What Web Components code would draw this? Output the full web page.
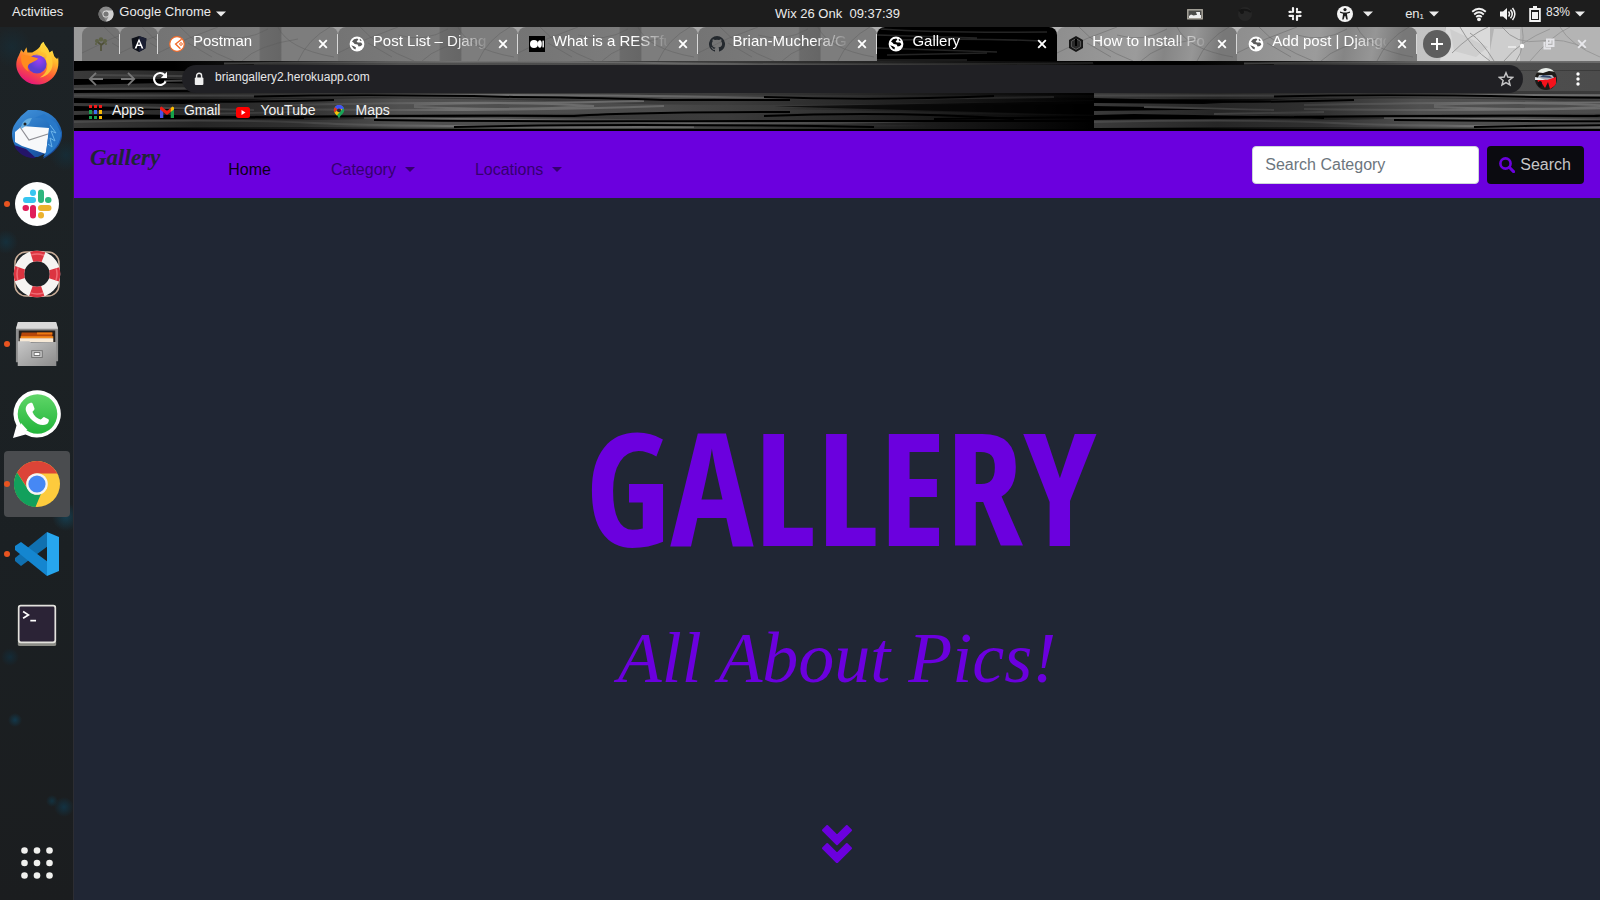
<!DOCTYPE html>
<html lang="en">
<head>
<meta charset="utf-8">
<title>Gallery</title>
<style>
html, body { height: 100%; margin: 0; }
body { background: #202634; font-family: "Liberation Sans", Arial, sans-serif; }
</style>
</head>
<body>
<desktop-shell></desktop-shell>

<script>
const ICONS = {
  globe: ['0 0 16 16', `<circle cx="8" cy="8" r="7.4" fill="#fff"/><path d="M3 5.5 5 3.2 8.2 2.4 9.4 3.6 7.6 5.6 8.8 6.6 12 6.4 13.4 8.2 12 10 9.6 10.4 8.6 8.6 5.6 8 4.6 6.8ZM2.2 9.2 5 10.2 7 11.4 6.4 13.4 4.6 12.6ZM11 2.8 12.8 4.4 11.6 5 10.6 4Z" fill="var(--land,#5c5c5c)"/>`],
  tree: ['0 0 16 16', `<path d="M8 15V8.500L4.500 6M8.200 9 12 6" stroke="#4f5038" stroke-width="1.600" fill="none"/><g fill="#5c6045"><circle cx="4" cy="5" r="2"/><circle cx="8" cy="3.400" r="2.200"/><circle cx="12" cy="5" r="2"/><circle cx="3" cy="8" r="1"/><circle cx="13" cy="8" r="1"/></g>`],
  angular: ['0 0 16 16', `<path d="M8 0 15.4 2.6 14.3 12.4 8 16 1.7 12.4.6 2.6Z" fill="#0d1018"/><path d="M8 0 15.4 2.6 14.3 12.4 8 16Z" fill="#1b1f33"/><path d="M8 2.4 3.6 12.4h1.9l.9-2.3h3.3l.9 2.3h1.8ZM8 5.8 9.1 8.5H6.9Z" fill="#fff"/>`],
  postman: ['0 0 16 16', `<circle cx="8" cy="8" r="7.300" fill="#fff" stroke="#f26b2a" stroke-width="1.200"/><path d="M12.600 3.200 6.600 8 11.400 12.800" fill="none" stroke="#f26b2a" stroke-width="1.400"/><circle cx="12" cy="8" r="1.300" fill="none" stroke="#f26b2a"/>`],
  medium: ['0 0 16 16', `<path d="M0 0h16v16H0Z"/><circle cx="5" cy="8" r="4" fill="#fff"/><ellipse cx="10.8" cy="8" rx="2" ry="3.7" fill="#fff"/><rect x="13.4" y="4.6" width="1.6" height="6.8" fill="#ddd"/>`],
  github: ['0 0 16 16', `<path fill="#24292e" d="M8 0a8 8 0 0 0-2.5 15.6c.4.1.5-.2.5-.4v-1.4c-2.2.5-2.7-1-2.7-1-.4-.9-.9-1.2-.9-1.2-.7-.5.1-.5.1-.5.8.1 1.2.8 1.2.8.7 1.2 1.9.9 2.3.7.1-.5.3-.9.5-1.1-1.8-.2-3.6-.9-3.6-4 0-.9.3-1.600.8-2.100-.1-.200-.4-1 .1-2.100 0 0 .7-.2 2.200.8a7.500 7.500 0 0 1 4 0c1.500-1 2.200-.8 2.200-.8.4 1.100.1 1.900.1 2.100.5.6.8 1.300.8 2.100 0 3.100-1.900 3.700-3.700 3.900.3.300.6.800.6 1.500v2.300c0 .2.1.5.5.4A8 8 0 0 0 8 0Z"/>`],
  hex: ['0 0 16 16', `<path d="M8 0 15 4V12L8 16 1 12V4Z" fill="#161616"/><path d="M8 2.600 12.600 5.300V10.700L8 13.400 3.400 10.700V5.300Z" fill="#2a2a2a" stroke="#6b6b6b" stroke-width=".8"/><path d="M8 2.600V10" stroke="#000" stroke-width="2" fill="none"/>`],
  close: ['0 0 16 16', `<path d="M4.200 4.200 11.800 11.800M11.800 4.200 4.200 11.800" stroke="currentColor" stroke-width="1.900"/>`],
  plus: ['0 0 28 28', `<circle cx="14" cy="14" r="14" fill="#5e5e5e"/><path d="M8 14H20M14 8V20" stroke="#fff" stroke-width="2"/>`],
  minimize: ['0 0 16 16', `<path d="M0 11h8" stroke="#e6e6e6" stroke-width="2"/><circle cx="14" cy="10" r="2.200" fill="#fff"/>`],
  restore: ['0 0 16 16', `<path d="M6 3.500h6.500V10H6ZM9.500 3.500V6.800H6M3.500 6V12.500H10" fill="none" stroke="#e4e4e8" stroke-width="2"/>`],
  back: ['0 0 16 16', `<path d="M15 8H2M8 1.800 1.800 8 8 14.200" fill="none" stroke="#787878" stroke-width="1.800"/>`],
  forward: ['0 0 16 16', `<path d="M1 8H14M8 1.800 14.200 8 8 14.200" fill="none" stroke="#787878" stroke-width="1.800"/>`],
  reload: ['0 0 16 16', `<path d="M13.600 10.300A6 6 0 1 1 12.600 4" fill="none" stroke="#fff" stroke-width="2.100"/><path d="M15 .8V7H8.800Z" fill="#fff"/>`],
  lock: ['0 0 16 16', `<rect x="3.800" y="6.500" width="8.600" height="7.500" rx="1" fill="#eee"/><path d="M5.600 7V4.800a2.500 2.500 0 0 1 5 0V7" fill="none" stroke="#eee" stroke-width="1.400"/>`],
  star: ['0 0 16 16', `<path d="M8 1.800 9.800 6.100 14.500 6.500 10.900 9.500 12 14 8 11.600 4 14 5.100 9.500 1.500 6.500 6.200 6.100Z" fill="none" stroke="#c4c4c6" stroke-width="1.500"/>`],
  avatar: ['0 0 22 22', `<clipPath id="c"><circle cx="11" cy="11" r="11"/></clipPath><g clip-path="url(#c)"><path d="M0 0h22v22H0Z" fill="#1d1b18"/><path d="M0 0H22V4L14 3 8 5 0 4Z" fill="#e8ece9"/><path d="M4 7 17 7 21 12H2Z" fill="#aab2bb"/><path d="M8 7 15 8 17 10 5 9Z" fill="#33476c"/><path d="M2 10 12 12 21 9V17L15 21 13 14 10 20 6 14 3 14Z" fill="#f5121c"/><path d="M0 9 5 10 11 12 5 12 0 12Z" fill="#e9eef2"/><ellipse cx="5" cy="16" rx="2" ry="3" fill="#111"/></g>`],
  dots: ['0 0 16 16', `<g fill="#fff"><circle cx="8" cy="3" r="1.700"/><circle cx="8" cy="8" r="1.700"/><circle cx="8" cy="13" r="1.700"/></g>`],
  apps: ['0 0 14 14', `<path d="M1 0h3v3H1ZM6 0h3v3H6ZM11 0h3v3h-3Z" fill="#f01818"/><path d="M1 5h3v4H1ZM1 11h3v3H1ZM6 11h3v3H6Z" fill="#18a050"/><path d="M6 5h3v4H6Z" fill="#3f70f0"/><path d="M11 5h3v4h-3ZM11 11h3v3h-3Z" fill="#f8ba08"/>`],
  gmail: ['0 0 14 14', `<path d="M0 3 3.300 5V13H0Z" fill="#4a50e8"/><path d="M10.700 5 14 3V13H10.700Z" fill="#16a34a"/><path d="M0 2.500 1.500 1.500 7 6 10.700 3V7L7 10 0 4.600Z" fill="#ee1c14"/><path d="M10.700 3 12.500 1.500 14 2.500V4.600L10.700 7Z" fill="#fbbc04"/>`],
  youtube: ['0 0 14 14', `<rect y="2" width="14" height="11" rx="2.500" fill="#f00"/><path d="M5.500 5 9.500 7.500 5.500 10Z" fill="#fff"/>`],
  maps: ['0 0 14 14', `<path d="M7 0a5.200 5.200 0 0 0-5.200 5.200C1.800 9 6 9.500 7 14 8 9.500 12.200 9 12.200 5.200A5.200 5.200 0 0 0 7 0Z" fill="#18a558"/><path d="M3 1.900A5.200 5.200 0 0 1 11.800 3.200L7 7Z" fill="#4468f0"/><path d="M3 1.900 5.600 4.200 2.500 7.800A5.200 5.200 0 0 1 3 1.900Z" fill="#e8301f"/><path d="M2.500 7.800 9.400 1.400 10 4.500 4.800 10.500Z" fill="#fbc108"/><circle cx="7" cy="5.200" r="2" fill="#2b2b2b"/><path d="M3 2A5.200 5.200 0 0 1 11.800 3.200L8.600 4A2 2 0 0 0 5.600 4.200Z" fill="#4450f4"/>`],
  chromegrey: ['0 0 16 16', `<circle cx="8" cy="8" r="7.500" fill="#8a8a8a"/><path d="M8 4.500h6.700A7.500 7.500 0 0 1 8 15.500L11 9.800Z" fill="#d0d0d0"/><path d="M1.500 4.200 5 9.700 8 15.500A7.500 7.500 0 0 1 1.500 4.200Z" fill="#6d6d6d"/><circle cx="8" cy="8" r="3.500" fill="#ddd"/><circle cx="8" cy="8" r="2.600" fill="#777"/>`],
  caret: ['0 0 10 10', `<path d="M0 2.500H10L5 7.500Z" fill="currentColor"/>`],
  picture: ['0 0 16 16', `<rect x=".8" y="3.800" width="14.400" height="9" fill="#4a4a48" stroke="#aeaaa0" stroke-width="1.400"/><path d="M2 10 4 8.500 6.500 9.500 9 9 14 9V12H2Z" fill="#eee"/><path d="M9 6H13V9H10Z" fill="#eee"/>`],
  orb: ['0 0 16 16', `<circle cx="8" cy="8" r="7" fill="#262626"/><path d="M2 5Q8 2 14 6" stroke="#161616" stroke-width="2" fill="none"/><circle cx="5" cy="6" r="2" fill="#151515"/>`],
  slackmono: ['0 0 16 16', `<g stroke="#f2f2f2" stroke-width="2.200" stroke-linecap="round"><path d="M6 2V5.500M2.500 5.800H3.500M10 3V3.500M10 6.200H13.500M2.500 9.800H6M6 12.500V13M10 10V14M12.500 9.800H13.500"/><path d="M10 2.500V6M2.500 6H6M6 10V13.500M10 10H13.500" stroke-width="1.600"/></g>`],
  access: ['0 0 16 16', `<circle cx="8" cy="8" r="8" fill="#f4f4f4"/><circle cx="8" cy="3.600" r="1.600" fill="#1d1d1d"/><path d="M3 5.500 6.400 6.400H9.600L13 5.500V6.800L9.900 7.800 10.800 13.500H9.400L8.300 10H7.700L6.600 13.500H5.200L6.100 7.800 3 6.800Z" fill="#1d1d1d"/>`],
  wifi: ['0 0 16 16', `<g fill="none" stroke="#f2f2f2" stroke-width="1.900"><path d="M1.200 5.800Q8 -.2 14.800 5.800"/><path d="M3.200 8.500Q8 4.200 12.800 8.500"/><path d="M5.200 11Q8 8.600 10.800 11"/></g><circle cx="8" cy="13.300" r="1.900" fill="#f2f2f2"/>`],
  volume: ['0 0 16 16', `<path d="M0 5.500H3L7 2V14L3 10.500H0Z" fill="#f2f2f2"/><g fill="none" stroke="#f2f2f2" stroke-width="1.500"><path d="M8.500 5.500Q10.500 8 8.500 10.500M10.500 3.700Q14 8 10.500 12.300M12.500 2Q17.200 8 12.500 14"/></g>`],
  battery: ['0 0 12 16', `<path d="M4 0H8V2H11.800V16H.2V2H4Z" fill="#f2f2f2"/><path d="M2 4H10V14H2Z" fill="#1d1d1d"/><path d="M3 6H9V13H3Z" fill="#f2f2f2"/>`],
  search: ['0 0 16 16', `<circle cx="6.500" cy="6.500" r="5.100" fill="none" stroke="#6b00de" stroke-width="2.600"/><path d="M10.300 10.300 14.600 14.600" stroke="#6b00de" stroke-width="3" stroke-linecap="round"/>`],
  chevrons: ['0 0 30 38', `<g fill="#6b00de" stroke="#6b00de" stroke-width="2" stroke-linejoin="round"><path d="M1 5.200 5.200 1 15 10.800 24.800 1 29 5.200 15 19.200ZM1 23.200 5.200 19 15 28.800 24.800 19 29 23.200 15 37.200Z"/></g>`],
  firefox: ['0 0 48 48', `<defs><linearGradient id="a" x1=".8" y1="0" x2=".3" y2="1"><stop offset="0" stop-color="#fff44f"/><stop offset=".35" stop-color="#ffb52a"/><stop offset=".65" stop-color="#ff5a36"/><stop offset="1" stop-color="#e3127f"/></linearGradient><radialGradient id="b" cx=".6" cy=".3"><stop offset="0" stop-color="#9a3ff5"/><stop offset="1" stop-color="#5b3fd0"/></radialGradient></defs><path d="M5 15 7.500 9 10 12 13 6.500 14 12 19 12C22 10 25 9 27 6 28 3 30 1 31 1 32 5 36 7 37 12L40 10 42 16C44 18 45 20 46 17 47 24 46 30 43 35A22 22 0 0 1 5 34C1 27 2 20 5 15Z" fill="url(#a)"/><circle cx="24" cy="24" r="10" fill="url(#b)"/><path d="M20 15C26 13 31 14 33 19 36 14 33 11 28 11L30 2C34 8 39 13 40 20 42 30 35 37 27 38 36 33 36 24 33 19 31 16 27 14 20 15Z" fill="#ffcf37" opacity=".85"/><path d="M8 14 17 16 25 18C24 21 20 21 18 23 14 24 13 29 16 32 9 29 6 21 8 14Z" fill="#ff8b1f"/>`],
  thunderbird: ['0 0 50 50', `<defs><linearGradient id="a" x1=".2" y1="0" x2=".8" y2="1"><stop offset="0" stop-color="#3f8fd8"/><stop offset=".6" stop-color="#1e68b8"/><stop offset="1" stop-color="#17408e"/></linearGradient></defs><path d="M9 7 16 1 22 1C34 0 47 8 50 23 51 34 44 43 31 50L34 44 26 48C13 49 0 40 0 25 0 17 5 12 9 7Z" fill="url(#a)"/><path d="M2 36C6 46 16 50 24 49L14 40Z" fill="#241468"/><path d="M3 23 10 17 37 19 34 45 10 37 3 33Z" fill="#f7f8fa"/><path d="M8 18 17 31 36 25" fill="none" stroke="#8e8e94" stroke-width="1.200"/><path d="M22 9C32 8 40 13 37 22L34 43 31 48C43 43 49 33 49 24L44 14 32 5Z" fill="#2878c8"/><path d="M38 16 44 24 39 22 43 32 38 29 40 38 36 35" fill="none" stroke="#6cb4ea" stroke-width="1"/><path d="M9 20C9 13 14 9 20 9L17 15Z" fill="#64acdf"/><circle cx="13" cy="15" r="1.500" fill="#222"/>`],
  slack: ['0 0 44 44', `<circle cx="22" cy="22" r="22" fill="#fff"/><g stroke-width="6" stroke-linecap="round"><path d="M11 18H18M18 10.500V11" stroke="#36c5f0"/><path d="M26 10.500V18M33 18H33.500" stroke="#2eb67d"/><path d="M26 26H33.500M26 33V33.500" stroke="#ecb22e"/><path d="M18 26V33.500M10.500 26H11" stroke="#e01e5a"/></g>`],
  help: ['0 0 48 48', `<rect x="2" y="2" width="44" height="44" rx="11" fill="none" stroke="#c9ad98" stroke-width="1.500"/><circle cx="24" cy="24" r="18" fill="none" stroke="#f6f4f2" stroke-width="10.500"/><circle cx="24" cy="24" r="18" fill="none" stroke="#dc3440" stroke-width="10.500" stroke-dasharray="12 16.274" stroke-dashoffset="6"/><circle cx="24" cy="24" r="20" fill="none" stroke="#f8838a" stroke-width="1.500" stroke-dasharray="13 18.416" stroke-dashoffset="6.500" opacity=".7"/>`],
  files: ['0 0 48 48', `<defs><linearGradient id="a" x1="0" y1="0" x2="1" y2="1"><stop offset="0" stop-color="#c8c8c8"/><stop offset="1" stop-color="#8b8b8b"/></linearGradient></defs><path d="M4 2H44L46 8V42H44V47H4V43H2V8Z" fill="#8e8e8e"/><path d="M4 1H44L46 8H2Z" fill="#d9d9d9"/><path d="M5 10H43V22H5Z" fill="#241f1d"/><path d="M8 12 40 12V22H6Z" fill="#b6460a"/><path d="M24 12H40V14H24Z" fill="#ee7a11"/><path d="M7 16H41V18H7Z" fill="#f48a1c"/><path d="M6 18H41V22H6Z" fill="#f7e9d6"/><path d="M4 21H16L18 23 44 22V47H4Z" fill="url(#a)"/><rect x="18.500" y="31" width="11" height="7" fill="#c9c9c9" stroke="#707070"/><rect x="21" y="33" width="6" height="3" fill="#fff" stroke="#555" stroke-width=".8"/>`],
  whatsapp: ['0 0 48 48', `<defs><linearGradient id="a" x1="0" y1="0" x2="0" y2="1"><stop offset="0" stop-color="#5fd668"/><stop offset="1" stop-color="#22b43a"/></linearGradient></defs><path d="M0 48 3.500 35.500A23.700 23.700 0 1 1 12.500 44.500Z" fill="#fff"/><circle cx="24.500" cy="24" r="19.800" fill="url(#a)"/><path d="M5.500 42.500 8 33 14.500 40Z" fill="#fff"/><path d="M17 13C19 12.500 19.500 13 20 14.500L21.500 18.500C22 20 19.500 21 19.500 22 21 26 24.500 28.500 27.500 29.500 29 29.500 29.500 27 31 27L35.500 29.300C36.500 30 35.500 33 34 34 27 38 16 30 13 21 12 17 14 14 17 13Z" fill="#fff"/>`],
  chrome: ['0 0 48 48', `<circle cx="24" cy="24" r="23" fill="#fdcb3d"/><path d="M4 12.500A23 23 0 0 1 44.500 13.500H24A10.500 10.500 0 0 0 14 27.500Z" fill="#dc4437"/><path d="M4 12.500 15 29.500A10.500 10.500 0 0 0 28 33.700L22.500 47A23 23 0 0 1 4 12.500Z" fill="#12a05c"/><circle cx="24" cy="24" r="10.800" fill="#f5f5f5"/><circle cx="24" cy="24" r="8.600" fill="#4688f4"/>`],
  vscode: ['0 0 48 48', `<path d="M34 2 35 16 8 36 2 31V28Z" fill="#1070b0"/><path d="M2 16 8 12 35 32 34 46 2 20Z" fill="#1486d0"/><path d="M34 2 46 7V41L34 46Z" fill="#27a6ee"/>`],
  terminal: ['0 0 48 48', `<path d="M4 42H44V45Q44 47 42 47H6Q4 47 4 45Z" fill="#8b8c86"/><rect x="4" y="4" width="40" height="40" rx="3" fill="#e3e2dd"/><rect x="5.800" y="5.800" width="36.400" height="36.400" rx="1.500" fill="#2b2336"/><path d="M9.500 11 15 14.500 9.500 18" fill="none" stroke="#fff" stroke-width="1.800"/><path d="M17 20.500H23" stroke="#fff" stroke-width="1.800"/>`],
  launcher: ['0 0 48 48', `<g fill="#f0f0ee"><circle cx="11.500" cy="11.500" r="3.300"/><circle cx="24" cy="11.500" r="3.300"/><circle cx="36.500" cy="11.500" r="3.300"/><circle cx="11.500" cy="24" r="3.300"/><circle cx="24" cy="24" r="3.300"/><circle cx="36.500" cy="24" r="3.300"/><circle cx="11.500" cy="36.500" r="3.300"/><circle cx="24" cy="36.500" r="3.300"/><circle cx="36.500" cy="36.500" r="3.300"/></g>`]
};

const define = (name, html) => customElements.define(name, class extends HTMLElement {
  constructor() {
    super();
    const t = document.createElement('template');
    t.innerHTML = html;
    this.attachShadow({ mode: 'open' }).append(t.content.cloneNode(true));
  }
});

const RESET = `*{box-sizing:border-box}button{font:inherit;color:inherit;background:none;border:0;padding:0;display:flex;align-items:center;justify-content:center}a{color:inherit;text-decoration:none}`;

customElements.define('ui-icon', class extends HTMLElement {
  connectedCallback() {
    if (this.shadowRoot) return;
    const [box, art] = ICONS[this.getAttribute('name')];
    const size = this.getAttribute('size') || 16;
    this.attachShadow({ mode: 'open' }).innerHTML =
      `<style>:host{display:block;flex:none;height:${size}px}svg{display:block;height:${size}px;width:auto}</style><svg viewBox="${box}" aria-hidden="true">${art}</svg>`;
  }
});

define('desktop-shell', `<style>${RESET}
  :host{display:grid;grid-template:27px 1fr / 74px 1fr;min-height:100vh}
  top-bar{grid-column:1/3}
</style>
<top-bar></top-bar><app-dock></app-dock><browser-window></browser-window>`);

define('top-bar', `<style>${RESET}
  :host{display:flex;align-items:center;background:#1d1d1d;color:#ebebeb;font-size:13px;line-height:16px;white-space:nowrap}
  .left{flex:1 1 90px;display:flex;align-items:center;padding-left:12px;gap:35px}
  .right{flex:1 1 0;display:flex;align-items:center;justify-content:flex-end;padding-right:15px;gap:32px}
  .tray{display:flex;align-items:center;gap:34px}
  button{gap:5px}
  .wide{gap:10px}
  .status{gap:13px}
  .charge{display:flex;align-items:center;gap:5px;font-size:12px}
  time{white-space:pre}
  .up{padding-bottom:4px}
</style>
<div class="left"><button class="up">Activities</button>
<button><ui-icon name="chromegrey"></ui-icon><span class="up">Google Chrome</span><ui-icon name="caret" size="10"></ui-icon></button></div>
<time>Wix 26 Onk  09:37:39</time>
<div class="right">
<div class="tray"><ui-icon name="picture"></ui-icon><ui-icon name="orb"></ui-icon><ui-icon name="slackmono"></ui-icon>
<button class="wide" aria-label="Accessibility"><ui-icon name="access"></ui-icon><ui-icon name="caret" size="10"></ui-icon></button></div>
<button>en₁<ui-icon name="caret" size="10"></ui-icon></button>
<button class="status"><ui-icon name="wifi"></ui-icon><ui-icon name="volume"></ui-icon><span class="charge"><ui-icon name="battery"></ui-icon><span class="up">83%</span><ui-icon name="caret" size="10"></ui-icon></span></button>
</div>`);

define('app-dock', `<style>${RESET}
  :host{display:flex;flex-direction:column;justify-content:space-between;align-items:center;padding:4px 0;border-right:1px solid #2c2d33;
   background:radial-gradient(circle at 10px 630px,#0d354a88,transparent 9px),radial-gradient(circle at 64px 780px,#0d405a99,transparent 10px),radial-gradient(circle at 15px 693px,#0e4560aa,transparent 7px),radial-gradient(circle at 52px 774px,#0e405699,transparent 6px),radial-gradient(circle at 66px 490px,#12506a99,transparent 14px),radial-gradient(circle at 6px 215px,#0f3c5088,transparent 12px),radial-gradient(circle at 66px 128px,#10344488,transparent 16px),radial-gradient(circle at 12px 20px,#14303c88,transparent 20px),linear-gradient(#1d2326,#1b2023 60%,#1b1d1f)}
  nav{display:grid;gap:4px}
</style>
<nav aria-label="Applications">
<dock-item icon="firefox" label="Firefox" size="46"></dock-item>
<dock-item icon="thunderbird" label="Thunderbird" size="50"></dock-item>
<dock-item icon="slack" label="Slack" size="44" running></dock-item>
<dock-item icon="help" label="Help" size="48"></dock-item>
<dock-item icon="files" label="Files" size="46" running></dock-item>
<dock-item icon="whatsapp" label="WhatsApp" size="48"></dock-item>
<dock-item icon="chrome" label="Google Chrome" size="48" running active></dock-item>
<dock-item icon="vscode" label="Visual Studio Code" size="48" running></dock-item>
<dock-item icon="terminal" label="Terminal" size="46"></dock-item>
</nav>
<dock-item icon="launcher" label="Show Applications" size="48"></dock-item>`);

customElements.define('dock-item', class extends HTMLElement {
  connectedCallback() {
    if (this.shadowRoot) return;
    this.attachShadow({ mode: 'open' }).innerHTML = `<style>${RESET}
      :host{display:block;position:relative}
      button{width:66px;height:66px;border-radius:4px}
      :host([active]) button{background:#4a4c4f}
      :host([running])::before{content:"";position:absolute;left:0;top:30px;width:6px;height:6px;border-radius:50%;background:#e95420}
    </style><button aria-label="${this.getAttribute('label')}"><ui-icon name="${this.getAttribute('icon')}" size="${this.getAttribute('size')}"></ui-icon></button>`;
  }
});

define('browser-window', `<style>${RESET}
  :host{display:flex;flex-direction:column;min-width:0}
  .frame{position:relative;background:#000}
  wood-grain{position:absolute;inset:0}
  .bars{position:relative}
  web-page{flex:1}
</style>
<tab-strip></tab-strip>
<div class="frame"><wood-grain></wood-grain><div class="bars"><address-bar></address-bar><bookmark-bar></bookmark-bar></div></div>
<web-page></web-page>`);

define('wood-grain', `<style>:host{display:block;overflow:hidden}svg{display:block}</style>
<svg width="2040" height="70" viewBox="0 0 2040 70" aria-hidden="true"><defs>
<linearGradient id="s" gradientUnits="userSpaceOnUse" x1="0" x2="1020"><stop offset="0" stop-color="#3a3a3a"/><stop offset=".12" stop-color="#262626"/><stop offset=".22" stop-color="#303030"/><stop offset=".32" stop-color="#505050"/><stop offset=".58" stop-color="#4a4a4a"/><stop offset=".76" stop-color="#303030"/><stop offset=".92" stop-color="#121212"/><stop offset="1" stop-color="#050505"/></linearGradient>
<linearGradient id="d" gradientUnits="userSpaceOnUse" x1="100" x2="1020"><stop offset="0" stop-color="#000"/><stop offset=".25" stop-color="#383838"/><stop offset=".6" stop-color="#3c3c3c"/><stop offset="1" stop-color="#000"/></linearGradient>
<linearGradient id="l" gradientUnits="userSpaceOnUse" x1="0" x2="1020"><stop offset="0" stop-color="#4a4a4a"/><stop offset=".2" stop-color="#3c3c3c"/><stop offset=".38" stop-color="#727272"/><stop offset=".6" stop-color="#666"/><stop offset=".9" stop-color="#262626"/><stop offset="1" stop-color="#1c1c1c"/></linearGradient>
<g id="t"><rect width="1020" height="70" fill="#000"/><path d="M100 0H1020V70H100Z" fill="url(#d)"/>
<g fill="url(#s)"><path d="M180 3Q400-1 560 1T1020 2V6Q700 10 180 9Z"/><path d="M0 10Q60 8 180 12L300 16 180 18H0Z"/><path d="M0 24 90 22 260 26 180 29H0Z"/><path d="M240 10H1020V30H240Z"/><path d="M0 32Q200 30 330 34H1020V37Q700 34 560 39L300 36Q90 40 0 37Z"/><path d="M200 38Q400 36 560 43 740 46 1020 39V43Q820 43 700 48 900 52 1020 53V55Q800 51 640 53 400 52 160 55L40 53 0 54V50L170 48 0 45V42L110 43Z"/><path d="M0 59Q120 57 240 59L430 56 700 61 860 65 500 68 230 66 0 67Z"/></g>
<g fill="none" stroke="url(#l)" stroke-width="1.800"><path d="M150 2.500Q420-1 580 2T1019 2"/><path d="M0 34.500H330Q500 33 640 36T980 36"/><path d="M210 44Q360 41 470 42L570 40"/><path d="M210 48Q420 51 590 45"/><path d="M340 44Q440 40 520 45 440 50 340 46"/><path d="M290 57Q420 58 560 61T850 60"/><path d="M0 61Q160 58 240 62T620 66"/><path d="M20 14 180 16M110 23 250 26M90 20 170 18M0 28 160 27M50 46 180 49M120 53 230 51"/></g>
<g fill="none" stroke="#000" stroke-width="2"><path d="M180 35.500Q300 33 440 36 540 37 590 39H716"/><path d="M200 56Q380 54 500 55 560 51 716 51"/><path d="M690 36Q800 40 920 35"/><path d="M690 55Q820 50 940 58"/><path d="M300 59Q480 61 680 60H1020"/><path d="M380 66Q540 62 800 66"/><path d="M0 69H1020"/><path d="M60 40Q160 42 260 39M60 57Q160 55 230 57M1020 56 860 58"/></g>
<path d="M700 45.500 1020 40V54Z" fill="#000" opacity=".7"/></g></defs>
<use href="#t"/><use href="#t" x="1020"/></svg>`);

define('tab-strip', `<style>${RESET}
  :host{display:flex;position:relative;height:34px;overflow:hidden;background:linear-gradient(90deg,#9a9a9a 0,#b5b5b5 70%,#c4c4c4 90%,#a4a4a4)}
  .art{position:absolute;right:0;top:0;height:34px}
  .tabs{display:flex;flex:0 1 1343px;min-width:0;padding-left:8px;position:relative}
  .end{flex:1;display:flex;align-items:center;justify-content:space-between;position:relative;padding:0 10px 0 6px}
  .controls{display:flex;gap:17px;color:#e8e8ec}
</style>
<svg class="art" width="190" height="34" aria-hidden="true"><path d="M35 0H190V34H35Z" fill="#b4b4b4"/><path d="M36 0H80V34H30Z" fill="#dadada"/><path d="M40 2 78 20 66 30 44 24M84 2H110V34H78Z" fill="#cecece"/><g fill="none" stroke="#999"><path d="M42 26Q60 8 78 0M50 0Q62 22 80 34M84 34Q72 14 60 6M92 0Q106 18 130 14T176 22M94 34Q110 14 140 2M112 0Q116 20 106 34M120 34Q142 8 160 0M150 0Q160 18 190 30"/></g></svg>
<div class="tabs" role="tablist">
<browser-tab pinned icon="tree"></browser-tab>
<browser-tab pinned icon="angular"></browser-tab>
<browser-tab icon="postman">Postman</browser-tab>
<browser-tab icon="globe">Post List – Djang</browser-tab>
<browser-tab icon="medium">What is a RESTfu</browser-tab>
<browser-tab icon="github">Brian-Muchera/Ga</browser-tab>
<browser-tab icon="globe" active>Gallery</browser-tab>
<browser-tab icon="hex" light>How to Install Po</browser-tab>
<browser-tab icon="globe" light>Add post | Django</browser-tab>
</div>
<div class="end"><button aria-label="New tab"><ui-icon name="plus" size="28"></ui-icon></button>
<div class="controls"><button aria-label="Minimize"><ui-icon name="minimize"></ui-icon></button><button aria-label="Restore"><ui-icon name="restore"></ui-icon></button><button aria-label="Close window"><ui-icon name="close"></ui-icon></button></div></div>`);

customElements.define('browser-tab', class extends HTMLElement {
  connectedCallback() {
    if (this.shadowRoot) return;
    const pinned = this.hasAttribute('pinned');
    this.attachShadow({ mode: 'open' }).innerHTML = `<style>${RESET}
      :host{display:flex;position:relative;overflow:hidden;flex:0 1 180px;min-width:0;align-items:center;padding:0 7px 0 11px;gap:8px;border-radius:8px 8px 0 0;
        background:linear-gradient(90deg,#747474,#7c7c7c 56%,#6b6b6b 57%,#666 68%,#7d7d7d 69%);color:#fff;font-size:15px;line-height:20px}
      :host([pinned]){flex:0 0 38px;padding:0 11px;background:#727272}
      :host([light]){background:linear-gradient(100deg,#8e8e8e,#9b9b9b 45%,#858585 60%,#969696 75%,#787878 90%)}
      :host([active]){background:#000;--land:#000}
      :host(:not([active]))::after{content:"";position:absolute;right:0;top:7px;width:1px;height:20px;background:#d8d8d8}
      .twigs{position:absolute;left:0;top:0;width:180px;height:34px}
      ui-icon,.title,button{position:relative}
      .title{flex:1;min-width:0;overflow:hidden;white-space:nowrap;padding:0 0 6px 0;-webkit-mask-image:linear-gradient(90deg,#000 80px,transparent 118px);mask-image:linear-gradient(90deg,#000 80px,transparent 118px)}
    </style>
    <svg class="twigs" viewBox="0 0 180 34" aria-hidden="true">${this.hasAttribute('active')
      ? '<path d="M4 2Q60 6 170 5M0 8 100 11M20 13Q100 11 165 14M0 21 120 25M10 28 110 26M0 33H90" stroke="#242424" stroke-width="1.600" fill="none"/>'
      : '<path d="M0 26Q30 10 60 0M22 0Q40 20 76 34M60 8Q86 16 110 2M84 34Q100 18 140 12M120 0Q130 22 176 30M30 16 54 30M140 34Q150 12 172 0" stroke="#5a5a5a" stroke-opacity=".4" fill="none"/>'}</svg>
    <ui-icon name="${this.getAttribute('icon')}"></ui-icon>${pinned ? '' : `<span class="title" role="tab"><slot></slot></span><button aria-label="Close tab"><ui-icon name="close"></ui-icon></button>`}`;
  }
});

define('address-bar', `<style>${RESET}
  :host{display:flex;align-items:center;height:34px;padding:2px 14px 0 14px;color:#e6e6e8}
  .nav{display:flex;gap:16px;padding-right:14px}
  label{flex:1;display:flex;align-items:center;height:28px;border-radius:14px;background:#202024;padding:0 9px;gap:8px}
  input{flex:1;min-width:0;border:0;background:none;color:inherit;outline:0;font:12px/16px "Liberation Sans",Arial,sans-serif;padding:0 0 4px}
  .end{display:flex;align-items:center;gap:13px;padding-left:12px}
</style>
<div class="nav"><button aria-label="Back"><ui-icon name="back"></ui-icon></button><button aria-label="Forward"><ui-icon name="forward"></ui-icon></button><button aria-label="Reload"><ui-icon name="reload"></ui-icon></button></div>
<label><ui-icon name="lock"></ui-icon><input type="text" aria-label="Address" value="briangallery2.herokuapp.com"><button aria-label="Bookmark"><ui-icon name="star"></ui-icon></button></label>
<div class="end"><button aria-label="Profile"><ui-icon name="avatar" size="22"></ui-icon></button><button aria-label="Menu"><ui-icon name="dots"></ui-icon></button></div>`);

define('bookmark-bar', `<style>${RESET}
  :host{display:flex;align-items:center;height:36px;padding:0 14px 2px;gap:16px;color:#f2f2f2;font-size:14px;line-height:20px}
  a{display:flex;align-items:center;gap:10px}
  span{padding-bottom:4px}
</style>
<a href="#apps"><ui-icon name="apps" size="14"></ui-icon><span>Apps</span></a>
<a href="#gmail"><ui-icon name="gmail" size="14"></ui-icon><span>Gmail</span></a>
<a href="#youtube"><ui-icon name="youtube" size="14"></ui-icon><span>YouTube</span></a>
<a href="#maps"><ui-icon name="maps" size="14"></ui-icon><span>Maps</span></a>`);

define('web-page', `<style>${RESET}
  :host{display:flex;flex-direction:column;background:#202634}
  site-hero{flex:1}
</style><site-nav></site-nav><site-hero></site-hero>`);

define('site-nav', `<style>${RESET}
  :host{display:flex;align-items:center;height:67px;padding:0 16px;background:#6b00de;font-size:16px;line-height:24px;color:#35006f}
  .brand{font:italic 700 23px/32px "Liberation Serif","Times New Roman",serif;color:#202634;padding-bottom:14px}
  nav{display:flex;flex:1;gap:60px;padding:10px 0 0 68px}
  nav a{display:flex;align-items:center;gap:9px}
  nav a[aria-current]{color:#0b0016}
  i{border:5px solid transparent;border-top-color:currentColor;border-bottom:0}
  form{display:flex;gap:8px}
  input{width:227px;height:38px;padding:6px 12px;border:1px solid #ced4da;border-radius:4px;background:#fff;font:inherit}
  input::placeholder{color:#6c757d;opacity:1}
  form button{height:38px;padding:0 13px 0 12px;gap:5px;border-radius:4px;background:#0b0b10;color:#c6c6c8}
</style>
<a class="brand" href="#home">Gallery</a>
<nav><a href="#home" aria-current="page">Home</a><a href="#category">Category<i></i></a><a href="#locations">Locations<i></i></a></nav>
<form onsubmit="return false"><input type="search" placeholder="Search Category" aria-label="Search Category"><button><ui-icon name="search"></ui-icon>Search</button></form>`);

define('site-hero', `<style>${RESET}
  :host{display:grid;grid-template-rows:1fr auto 1fr;justify-items:center;padding:26px 0 37px;color:#6b00de;text-align:center}
  .copy{grid-row:2;display:grid;gap:44px;padding-top:24px}
  h1{margin:0;padding-left:8px;font:700 156px/160px "Open Sans Condensed","Roboto Condensed","Open Sans",sans-serif}
  p{margin:0;font:italic 72px/96px "Liberation Serif","Times New Roman",serif}
  a{grid-row:3;align-self:end}
</style>
<div class="copy"><h1>GALLERY</h1><p>All About Pics!</p></div>
<a href="#photos" aria-label="Scroll to photos"><ui-icon name="chevrons" size="38"></ui-icon></a>`);
</script>
</body>
</html>
